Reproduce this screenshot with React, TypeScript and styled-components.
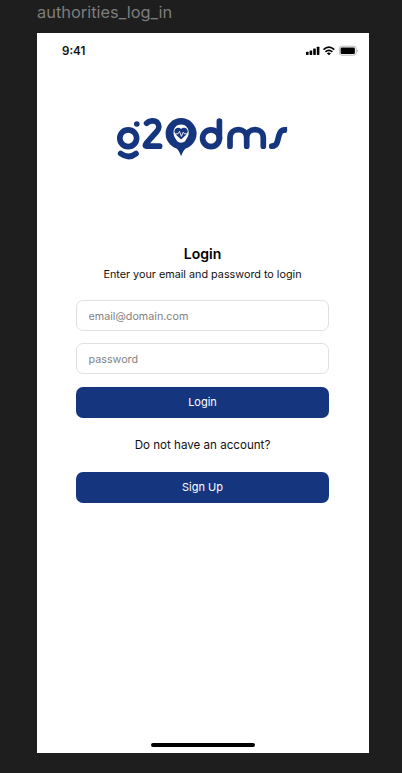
import React from "react";
import styled, { createGlobalStyle } from "styled-components";

const NAVY = "#15357f";

const GlobalStyle = createGlobalStyle`
  * { box-sizing: border-box; }
  body { margin: 0; background: #1e1e1e; font-family: Inter, sans-serif; }
`;

const Canvas = styled.div`
  height: 773px;
  padding: 0 33px 20px 37px;
  display: flex;
  flex-direction: column;
  overflow: hidden;
`;

const FrameLabel = styled.div`
  height: 33px;
  padding-top: 2px;
  font-size: 16.4px;
  line-height: 20px;
  color: #7d7d7d;
`;

const Phone = styled.main`
  flex: 1;
  background: #fff;
  display: flex;
  flex-direction: column;
  align-items: center;
`;

const StatusBar = styled.header`
  width: 100%;
  height: 36px;
  padding: 0 11px 0 25px;
  display: flex;
  align-items: center;
  justify-content: space-between;
`;

const Time = styled.span`
  font-size: 11.6px;
  font-weight: 600;
  line-height: 16px;
  color: #111;
`;

const LogoArea = styled.div`
  width: 100%;
  height: 56px;
  margin-top: 44px;
  display: flex;
  justify-content: center;
`;

const Form = styled.form`
  width: 253px;
  margin: 75px 1px 0 0;
  display: flex;
  flex-direction: column;
`;

const Title = styled.h1`
  margin: 0;
  font-size: 14px;
  font-weight: 600;
  line-height: 20px;
  text-align: center;
  color: #000;
`;

const Text = styled.p<{ $size: number }>`
  margin: 0;
  font-size: ${(p) => p.$size}px;
  line-height: 20px;
  text-align: center;
  color: #111;
  white-space: nowrap;
`;

const Field = styled.input`
  width: 100%;
  height: 31px;
  padding: 1px 11.5px 0;
  border: 1px solid #e0e0e0;
  border-radius: 7px;
  background: #fff;
  font: 400 10.75px/20px Inter, sans-serif;
  outline: none;
  &::placeholder { color: #828282; opacity: 1; }
`;

const Fields = styled.div`
  display: flex;
  flex-direction: column;
  gap: 12.4px;
  margin: 15px 0 12.4px;
`;

const Button = styled.button`
  width: 100%;
  height: 31px;
  padding: 0 0 1px;
  border: 0;
  border-radius: 7px;
  background: ${NAVY};
  color: #fff;
  font: 400 11px/20px Inter, sans-serif;
`;

const Subtitle = styled.div`
  padding-top: 1px;
`;

const Prompt = styled.div`
  padding: 17.2px 0 17.4px;
`;

const HomeIndicator = styled.div`
  width: 104px;
  height: 4px;
  margin: auto 0 6.5px;
  border-radius: 2px;
  background: #000;
`;

function StatusIcons() {
  return (
    <svg width="52" height="14" viewBox="306 44 52 14" aria-label="Signal, Wi-Fi, battery">
      <g fill="#000">
        <rect x="306" y="51.7" width="2.6" height="3.2" rx=".6" />
        <rect x="309.6" y="50.4" width="2.6" height="4.5" rx=".6" />
        <rect x="313.2" y="48.5" width="2.6" height="6.4" rx=".6" />
        <rect x="316.8" y="46.7" width="2.6" height="8.2" rx=".6" />
        <path d="M326.9 53.4Q328.9 51.8 330.9 53.4L328.9 55.3Z" />
      </g>
      <g fill="none" stroke="#000" strokeWidth="1.6">
        <path d="M323.5 49.6Q328.9 44.8 334.3 49.6" />
        <path d="M325.4 51.8Q328.9 48.8 332.4 51.8" />
      </g>
      <rect x="339.3" y="46.2" width="17" height="9" rx="2.5" fill="none" stroke="#b0b0b0" strokeWidth=".9" />
      <rect x="340.6" y="47.5" width="14.3" height="6.5" rx="1.3" fill="#000" />
      <path d="M357 49.2Q358.4 50.7 357 52.2Z" fill="#aaa" />
    </svg>
  );
}

function Logo() {
  return (
    <svg width="180" height="56" viewBox="113 113 180 56" aria-label="g20dms">
      <g fill="none" stroke={NAVY} strokeWidth="5.7" strokeLinecap="round" strokeLinejoin="round">
        <circle cx="128.2" cy="138.2" r="8.4" />
        <path d="M120.7 153.6Q128.3 159.4 136 153.6" />
        <path d="M146.6 123.2C149.3 120.4 154.5 120 157 122.2C159.6 124.8 159.4 128.7 156.8 131.5L146.4 143.2C144.6 145.4 145.1 146.2 147 146.2H159.6" />
        <circle cx="211" cy="138.2" r="8.4" />
        <path d="M219.4 121.2V138.2" />
        <path d="M230 146.2V137.8C230 127 246.7 127 246.7 137.8V146.2M246.7 137.8C246.7 127 263.3 127 263.3 137.8V146.2" />
        <path d="M271.8 146.2C275.2 146.2 276.6 144.6 277.4 141.5L279 135.2C280.1 131.2 281.7 129.8 284.4 129.8" />
      </g>
      <path fill={NAVY} d="M284.2 126.95H287.2L286.4 132.65H284.2Z" />
      <circle cx="136.8" cy="124" r="2.8" fill={NAVY} />
      <circle cx="181.1" cy="133.6" r="15.5" fill={NAVY} />
      <path fill={NAVY} d="M174.5 147C178 148.8 179.5 152 181.1 156.2C182.7 152 184.2 148.8 187.7 147Z" />
      <path fill="#fff" d="M181.1 124.6C185.6 124.6 188.7 128 188.7 132.4C188.7 136.5 186.5 138.2 185.5 140.6C184.2 143.4 178 143.4 176.7 140.6C175.7 138.2 173.5 136.5 173.5 132.4C173.5 128 176.6 124.6 181.1 124.6Z" />
      <path fill={NAVY} d="M181.1 139.6L176 134.7C171.6 129.4 178 125.4 181.1 129.1C184.2 125.4 190.6 129.4 186.2 134.7Z" />
      <path d="M174.5 133.8H178L179.5 131.4L181.4 136.4L183.2 132.3L184.5 133.8H187.8" fill="none" stroke="#fff" strokeWidth=".9" />
    </svg>
  );
}

export default function App() {
  return (
    <>
      <GlobalStyle />
      <Canvas>
        <FrameLabel>authorities_log_in</FrameLabel>
        <Phone>
          <StatusBar>
            <Time>9:41</Time>
            <StatusIcons />
          </StatusBar>
          <LogoArea>
            <Logo />
          </LogoArea>
          <Form>
            <Title>Login</Title>
            <Subtitle>
              <Text $size={10.8}>Enter your email and password to login</Text>
            </Subtitle>
            <Fields>
              <Field type="email" placeholder="email@domain.com" />
              <Field type="text" placeholder="password" />
            </Fields>
            <Button type="button">Login</Button>
            <Prompt>
              <Text $size={11.6}>Do not have an account?</Text>
            </Prompt>
            <Button type="button">Sign Up</Button>
          </Form>
          <HomeIndicator />
        </Phone>
      </Canvas>
    </>
  );
}
